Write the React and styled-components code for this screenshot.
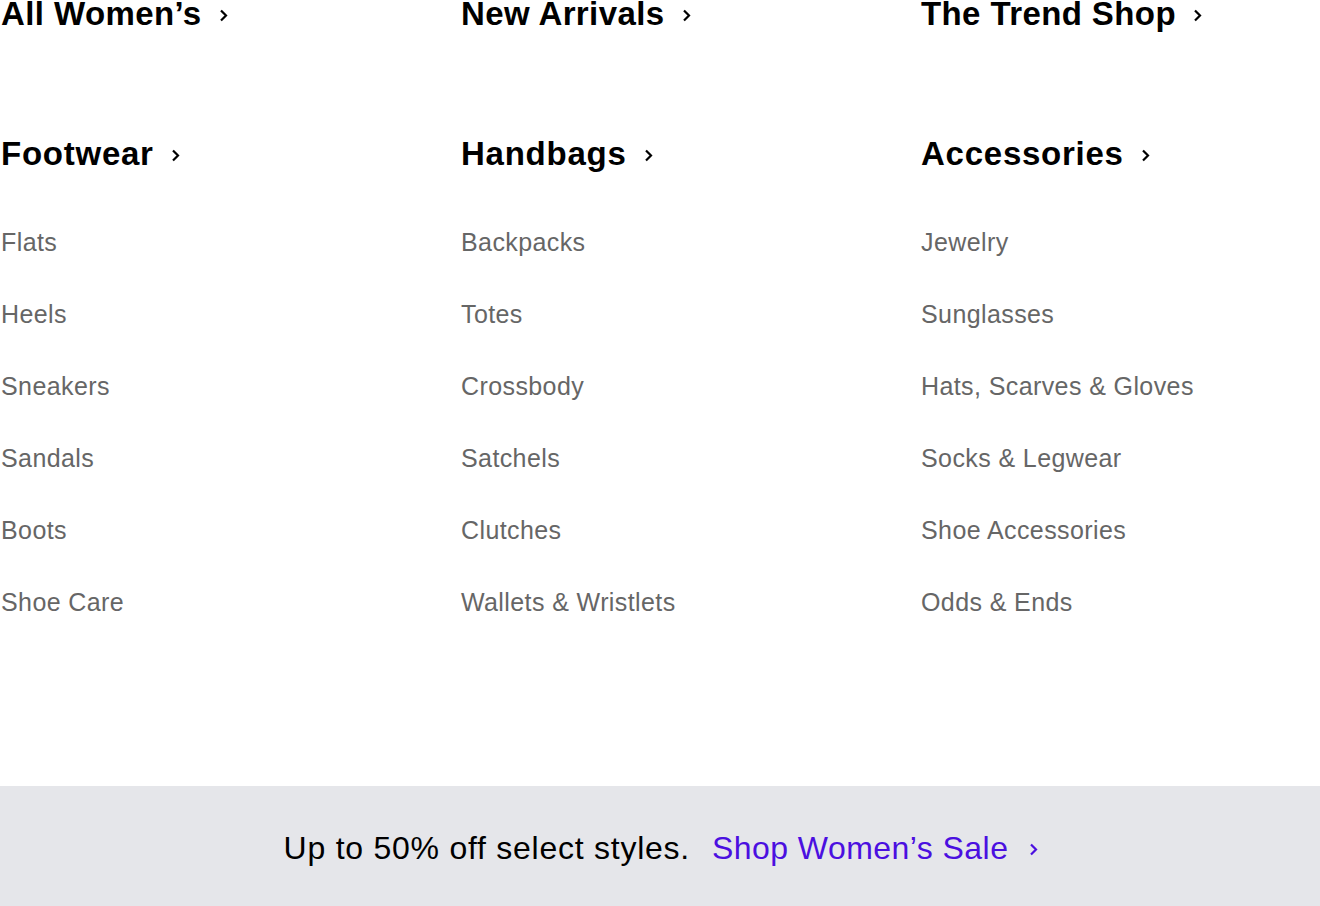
import React from 'react'
import styled, { createGlobalStyle } from 'styled-components'

const Global = createGlobalStyle`
html, body {
  margin: 0;
  padding: 0;
  background: #fff;
  overflow: hidden;
}
body {
  font-family: 'Liberation Sans', Arial, sans-serif;
  -webkit-font-smoothing: antialiased;
}
`

const Page = styled.div`
width: 1320px;
height: 906px;
display: flex;
flex-direction: column;
overflow: hidden;
`

const Menu = styled.div`
flex: 1;
margin-top: -11px;
padding-left: 1px;
display: grid;
grid-template-columns: repeat(3, 400px);
column-gap: 60px;
align-content: start;
`

const Column = styled.div`
display: flex;
flex-direction: column;
`

const Heading = styled.a`
display: flex;
align-items: center;
gap: 17px;
height: 50px;
margin-top: ${p => (p.$top ? '0' : '1px')};
margin-bottom: ${p => (p.$top ? '89px' : '27px')};
font-size: 33px;
font-weight: 700;
letter-spacing: ${p => (p.$top ? '0.4px' : '0.75px')};
color: #000;
text-decoration: none;
svg {
  margin-top: 2px;
}
`

const Links = styled.ul`
list-style: none;
margin: 0;
padding: 0;
display: flex;
flex-direction: column;
`

const Item = styled.li`
height: 72px;
display: flex;
align-items: center;
font-size: 25px;
letter-spacing: 0.4px;
color: #666;
a {
  color: inherit;
  text-decoration: none;
}
`

const Banner = styled.div`
height: 120px;
flex-shrink: 0;
background: #e5e6ea;
display: flex;
align-items: center;
justify-content: center;
gap: 22px;
font-size: 32px;
padding-left: 2px;
padding-top: 4px;
box-sizing: border-box;
`

const BannerText = styled.span`
color: #000;
letter-spacing: 0.75px;
`

const SaleLink = styled.a`
display: flex;
align-items: center;
gap: 21px;
color: #4b0fe0;
text-decoration: none;
letter-spacing: 0.45px;
svg {
  margin-top: 3px;
}
`

const Chevron = ({ color = '#000' }) => (
  <svg width="9" height="13" viewBox="0 0 9 13" fill="none">
    <path d="M2 1.5 L7 6.5 L2 11.5" stroke={color} strokeWidth="2.2" />
  </svg>
)

const columns = [
  {
    top: 'All Women\u2019s',
    title: 'Footwear',
    items: ['Flats', 'Heels', 'Sneakers', 'Sandals', 'Boots', 'Shoe Care'],
  },
  {
    top: 'New Arrivals',
    title: 'Handbags',
    items: ['Backpacks', 'Totes', 'Crossbody', 'Satchels', 'Clutches', 'Wallets & Wristlets'],
  },
  {
    top: 'The Trend Shop',
    title: 'Accessories',
    items: ['Jewelry', 'Sunglasses', 'Hats, Scarves & Gloves', 'Socks & Legwear', 'Shoe Accessories', 'Odds & Ends'],
  },
]

const App = () => {
  return (
    <>
      <Global />
      <Page>
        <Menu>
          {columns.map(col => (
            <Column key={col.title}>
              <Heading href="#" $top>
                {col.top} <Chevron />
              </Heading>
              <Heading href="#">
                {col.title} <Chevron />
              </Heading>
              <Links>
                {col.items.map(item => (
                  <Item key={item}>
                    <a href="#">{item}</a>
                  </Item>
                ))}
              </Links>
            </Column>
          ))}
        </Menu>
        <Banner>
          <BannerText>Up to 50% off select styles.</BannerText>
          <SaleLink href="#">
            Shop Women’s Sale <Chevron color="#4b0fe0" />
          </SaleLink>
        </Banner>
      </Page>
    </>
  )
}

export default App
